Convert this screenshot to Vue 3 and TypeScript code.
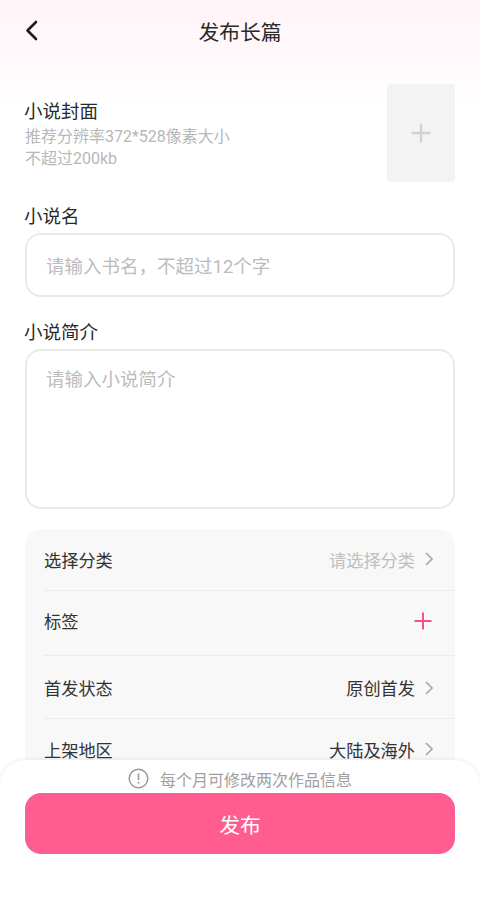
<script setup lang="ts">
interface Row { label: string; value?: string; muted?: boolean; plus?: boolean; height: number; shift: number }
const rows: Row[] = [
  { label: '选择分类', value: '请选择分类', muted: true, height: 62, shift: -1 },
  { label: '标签', plus: true, height: 65, shift: -5 },
  { label: '首发状态', value: '原创首发', height: 63, shift: 1 },
  { label: '上架地区', value: '大陆及海外', height: 63, shift: -3 },
]
function rowStyle(r: Row) {
  return {
    height: r.height + 'px',
    paddingTop: Math.max(r.shift, 0) + 'px',
    paddingBottom: Math.max(-r.shift, 0) + 'px',
  }
}
</script>

<template>
  <div class="page">
    <header class="head">
      <svg class="back" width="14" height="22" viewBox="0 0 14 22" fill="none">
        <path d="M11 2 L2.5 10.5 L11 19" stroke="#1c1c1c" stroke-width="2.6" stroke-linecap="round" stroke-linejoin="round" />
      </svg>
      <span class="title">发布长篇</span>
    </header>

    <section class="cover">
      <div class="cover-text">
        <div class="label first">小说封面</div>
        <div class="hint">推荐分辨率372*528像素大小</div>
        <div class="hint">不超过200kb</div>
      </div>
      <div class="cover-box">
        <svg width="20" height="20" viewBox="0 0 20 20">
          <path d="M10 0.5 V19.5 M0.5 10 H19.5" stroke="#d2d2d2" stroke-width="2.4" />
        </svg>
      </div>
    </section>

    <div class="label name-label">小说名</div>
    <div class="field input">请输入书名，不超过12个字</div>

    <div class="label intro-label">小说简介</div>
    <div class="field area">请输入小说简介</div>

    <section class="card">
      <div v-for="r in rows" :key="r.label" class="row" :style="rowStyle(r)">
        <span class="row-label">{{ r.label }}</span>
        <svg v-if="r.plus" class="plus" width="18" height="18" viewBox="0 0 18 18">
          <path d="M9 0.5 V17.5 M0.5 9 H17.5" stroke="#f5508a" stroke-width="2" />
        </svg>
        <template v-else>
          <span class="row-value" :class="{ muted: r.muted }">{{ r.value }}</span>
          <svg class="chev" width="8" height="14" viewBox="0 0 8 14" fill="none">
            <path d="M1 1 L7 7 L1 13" stroke="#a8a8a8" stroke-width="1.6" />
          </svg>
        </template>
      </div>
    </section>

    <footer class="sheet">
      <div class="notice">
        <svg width="21" height="21" viewBox="0 0 21 21" fill="none">
          <circle cx="10.5" cy="10.5" r="9.3" stroke="#9a9a9a" stroke-width="1.5" />
          <path d="M10.5 5.5 V12" stroke="#9a9a9a" stroke-width="1.6" />
          <circle cx="10.5" cy="14.8" r="1" fill="#9a9a9a" />
        </svg>
        <span>每个月可修改两次作品信息</span>
      </div>
      <button class="publish" type="button">发布</button>
    </footer>
  </div>
</template>

<style>
html, body { margin: 0; background: #fff; }
</style>

<style scoped>
.page {
  position: relative;
  width: 480px;
  height: 921px;
  overflow: hidden;
  box-sizing: border-box;
  padding: 0 25px;
  display: flex;
  flex-direction: column;
  background: linear-gradient(180deg, #fff4f8 0, #fff8fa 45px, #ffffff 105px);
  font-family: Roboto, "Noto Sans CJK SC", "Liberation Sans", sans-serif;
  color: #2a2a2a;
}
.head {
  position: relative;
  height: 62px;
  flex: none;
  display: flex;
  align-items: center;
  justify-content: center;
}
.back { position: absolute; left: 0; top: 20px; }
.title { font-size: 20.8px; color: #2a2a2a; }
.cover {
  margin-top: 22px;
  height: 98px;
  flex: none;
  display: flex;
  justify-content: space-between;
}
.cover-text { padding-top: 15px; }
.label { font-size: 18.5px; line-height: 26px; color: #2a2a2a; margin-left: -1px; }
.label.first { line-height: 27px; }
.hint { font-size: 16px; line-height: 22px; color: #b8b8b8; }
.cover-box {
  width: 68px;
  height: 98px;
  border-radius: 4px;
  background: #f3f3f3;
  display: flex;
  align-items: center;
  justify-content: center;
}
.name-label { margin-top: 22px; }
.intro-label { margin-top: 23px; }
.field {
  box-sizing: border-box;
  flex: none;
  border: 2px solid #e7eceb;
  border-radius: 16px;
  background: #fff;
  padding-left: 19px;
  font-size: 18.5px;
  color: #bcbcbc;
}
.input {
  margin-top: 3px;
  height: 64px;
  line-height: 64px;
}
.area {
  margin-top: 3px;
  height: 160px;
  padding-top: 15px;
  line-height: 28px;
}
.card {
  margin-top: 20px;
  flex: none;
  border-radius: 16px 16px 0 0;
  background: #f8f8f8;
}
.row {
  box-sizing: border-box;
  margin-left: 18px;
  padding-left: 1px;
  padding-right: 22px;
  display: flex;
  align-items: center;
  border-bottom: 1px solid #ececec;
}
.row:last-child { border-bottom: none; }
.row-label { flex: 1; font-size: 17.2px; color: #333; }
.row-value { font-size: 17.2px; color: #333; }
.row-value.muted { color: #bfbfbf; }
.chev { margin-left: 10px; }
.plus { margin-right: 1px; }
.sheet {
  position: absolute;
  left: 0;
  right: 0;
  top: 760px;
  bottom: 0;
  box-sizing: border-box;
  padding: 0 25px;
  border-radius: 26px 26px 0 0;
  background: #fff;
  box-shadow: 0 -1px 4px rgba(0, 0, 0, 0.07);
}
.notice {
  height: 33px;
  display: flex;
  align-items: center;
  justify-content: center;
  gap: 11px;
  font-size: 16px;
  color: #a0a0a0;
  padding-top: 4px;
  box-sizing: border-box;
}
.publish {
  display: block;
  width: 100%;
  height: 61px;
  border: none;
  border-radius: 16px;
  background: #ff5c8f;
  color: #fff;
  font-family: inherit;
  font-size: 20.8px;
}
</style>
